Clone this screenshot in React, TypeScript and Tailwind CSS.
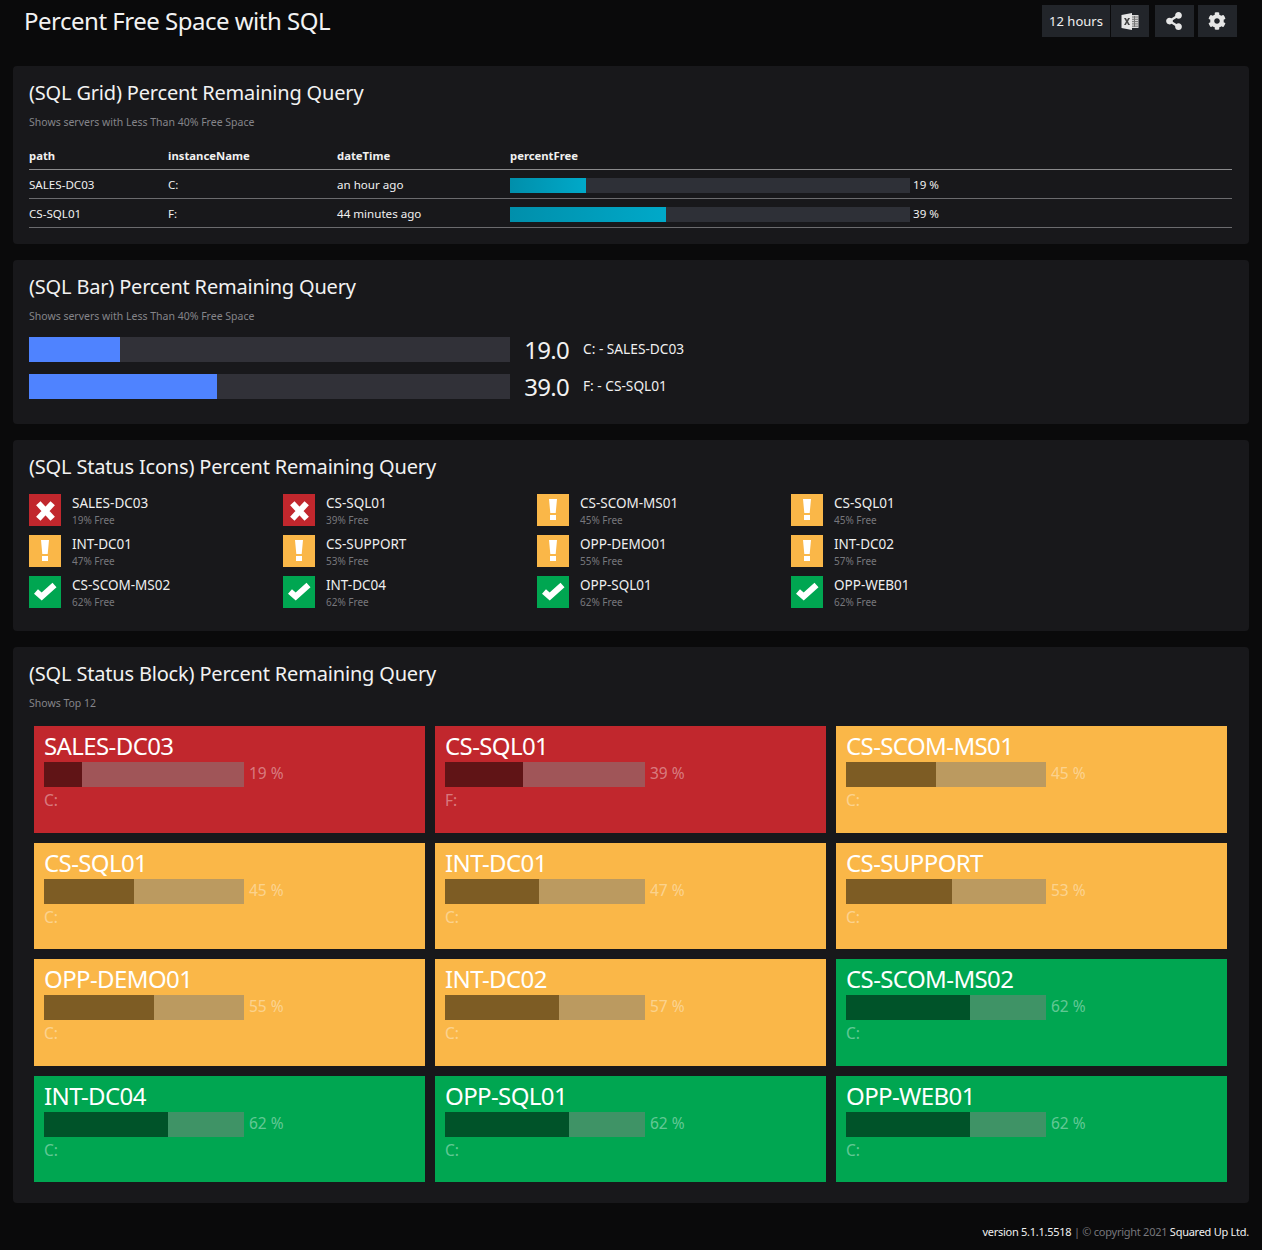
import React from "react";
import { FaCog, FaShareAlt } from "react-icons/fa";

type Status = "red" | "amber" | "green";
const servers: { name: string; pct: number; inst: string; status: Status }[] = [
  { name: "SALES-DC03", pct: 19, inst: "C:", status: "red" },
  { name: "CS-SQL01", pct: 39, inst: "F:", status: "red" },
  { name: "CS-SCOM-MS01", pct: 45, inst: "C:", status: "amber" },
  { name: "CS-SQL01", pct: 45, inst: "C:", status: "amber" },
  { name: "INT-DC01", pct: 47, inst: "C:", status: "amber" },
  { name: "CS-SUPPORT", pct: 53, inst: "C:", status: "amber" },
  { name: "OPP-DEMO01", pct: 55, inst: "C:", status: "amber" },
  { name: "INT-DC02", pct: 57, inst: "C:", status: "amber" },
  { name: "CS-SCOM-MS02", pct: 62, inst: "C:", status: "green" },
  { name: "INT-DC04", pct: 62, inst: "C:", status: "green" },
  { name: "OPP-SQL01", pct: 62, inst: "C:", status: "green" },
  { name: "OPP-WEB01", pct: 62, inst: "C:", status: "green" },
];

const tileBg: Record<Status, string> = { red: "bg-[#c1272d]", amber: "bg-[#fab748]", green: "bg-[#00a651]" };
const trackBg: Record<Status, string> = { red: "bg-[#a05558]", amber: "bg-[#bb9a60]", green: "bg-[#3f9366]" };
const fillBg: Record<Status, string> = { red: "bg-[#601416]", amber: "bg-[#7d5c24]", green: "bg-[#005329]" };

function ExcelIcon() {
  return (
    <svg width="18" height="17" viewBox="0 0 18 17" className="block">
      <rect x="8" y="2" width="9.500" height="13" fill="#d8d8d8" />
      <path d="M10 4h7M10 6.300h7M10 8.600h7M10 10.900h7M10 13.200h7M13.500 3v11" stroke="#777" strokeWidth="1" fill="none" />
      <path d="M0.500 2 11 0v17L0.500 15z" fill="#e6e6e6" />
      <path d="M3 5h1.900l1.100 2.100L7.100 5H9L7 8.500l2 3.400H7.100L6 9.800 4.900 11.900H3L5 8.500z" fill="#444" />
    </svg>
  );
}

function Panel({ top, title, sub, children }: { top: string; title: string; sub?: string; children: React.ReactNode }) {
  return (
    <section className={`bg-[#18181b] rounded-[4px] pl-4 pr-[17px] ${top}`}>
      <h2 className="text-[20px] leading-[28px] text-[#f2f2f2] font-normal tracking-[-0.18px]">{title}</h2>
      {sub && <p className="text-[10.5px] leading-[14px] mt-[8px] text-[#85858a]">{sub}</p>}
      {children}
    </section>
  );
}

function Row({ path, inst, time, pct }: { path: string; inst: string; time: string; pct: number }) {
  return (
    <div className="grid grid-cols-[139px_169px_173px_1fr] items-center h-[29px] pt-[2px] border-b border-[#6b6b6e] text-[11.600px] text-[#f0f0f0]">
      <span>{path}</span>
      <span>{inst}</span>
      <span>{time}</span>
      <div className="flex items-center">
        <div className="w-[400px] h-[15px] mt-px bg-[#2e3037]">
          <div className="h-full bg-gradient-to-r from-[#008fab] to-[#00a9c9]" style={{ width: `${pct}%` }} />
        </div>
        <span className="ml-[3px]">{pct} %</span>
      </div>
    </div>
  );
}

function HBar({ pct, text }: { pct: number; text: string }) {
  return (
    <div className="flex items-center h-[25px]">
      <div className="w-[481px] h-full bg-[#313138]">
        <div className="h-full bg-[#4f83ff]" style={{ width: `${pct}%` }} />
      </div>
      <span className="w-[59px] text-right text-[24px] leading-[25px] tracking-[-0.7px] text-[#f2f2f2]">{pct}.0</span>
      <span className="ml-[14px] text-[13.700px] text-[#f0f0f0]">{text}</span>
    </div>
  );
}

function StatusGlyph({ status }: { status: Status }) {
  return (
    <div className={`w-8 h-8 shrink-0 ${tileBg[status]}`}>
      <svg width="32" height="32" viewBox="0 0 32 32" className="block">
        {status === "red" && <path d="M9.300 9.300 23.700 24.700M23.700 9.300 9.300 24.700" stroke="#fff" strokeWidth="6" fill="none" />}
        {status === "amber" && <path d="M12 5h8l-1.300 14h-5.400zM13 21h6v5h-6z" fill="#fff" />}
        {status === "green" && <path d="M7 15.500 12.700 20.500 25.500 9" stroke="#fff" strokeWidth="6" fill="none" />}
      </svg>
    </div>
  );
}

export default function App() {
  return (
    <div className="w-[1262px] h-[1250px] overflow-hidden bg-[#0a0a0b] font-['Noto_Sans','Open_Sans',sans-serif]">
      <header className="h-[66px] flex items-start justify-between pl-6 pr-[25px]">
        <h1 className="text-[24px] leading-[42px] text-[#f2f2f2] tracking-[-0.5px]">Percent Free Space with SQL</h1>
        <div className="flex items-center mt-[5px]">
          <div className="flex gap-px">
            <div className="h-8 w-[68px] pt-px bg-[#22252a] flex items-center justify-center text-[13px] text-[#f0f0f0]">12 hours</div>
            <div className="h-8 w-[38px] bg-[#22252a] flex items-center justify-center"><ExcelIcon /></div>
          </div>
          <div className="h-8 w-[39px] pr-[2px] ml-[6px] bg-[#22252a] flex items-center justify-center text-[#e6e6e6]"><FaShareAlt size={18} /></div>
          <div className="h-8 w-[39px] pr-[2px] ml-[4px] bg-[#22252a] flex items-center justify-center text-[#e6e6e6]"><FaCog size={18} /></div>
        </div>
      </header>

      <main className="mx-[13px] flex flex-col gap-4">
        <Panel top="pt-[13px] h-[178px]" title="(SQL Grid) Percent Remaining Query" sub="Shows servers with Less Than 40% Free Space">
          <div className="mt-[13px]">
            <div className="grid grid-cols-[139px_169px_173px_1fr] items-center h-[28px] pt-[2px] border-b border-[#8a8a8c] text-[11.300px] font-bold text-[#f0f0f0]">
              <span>path</span><span>instanceName</span><span>dateTime</span><span>percentFree</span>
            </div>
            <Row path="SALES-DC03" inst="C:" time="an hour ago" pct={19} />
            <Row path="CS-SQL01" inst="F:" time="44 minutes ago" pct={39} />
          </div>
        </Panel>

        <Panel top="pt-[13px] h-[164px]" title="(SQL Bar) Percent Remaining Query" sub="Shows servers with Less Than 40% Free Space">
          <div className="mt-[14px] flex flex-col gap-3">
            <HBar pct={19} text="C: - SALES-DC03" />
            <HBar pct={39} text="F: - CS-SQL01" />
          </div>
        </Panel>

        <Panel top="pt-[13px] h-[191px]" title="(SQL Status Icons) Percent Remaining Query">
          <div className="mt-[13px] grid grid-cols-[repeat(4,254px)] gap-y-[9px]">
            {servers.map((s, i) => (
              <div key={i} className="flex gap-[11px] h-8">
                <StatusGlyph status={s.status} />
                <div className="flex flex-col">
                  <span className="text-[13.500px] leading-[18px] text-[#efefef]">{s.name}</span>
                  <span className="text-[10px] leading-[17px] text-[#77777c]">{s.pct}% Free</span>
                </div>
              </div>
            ))}
          </div>
        </Panel>

        <Panel top="pt-[13px] h-[556px]" title="(SQL Status Block) Percent Remaining Query" sub="Shows Top 12">
          <div className="mt-[16px] px-[5px] grid grid-cols-3 gap-[10px] auto-rows-[106.500px]">
            {servers.map((s, i) => (
              <div key={i} className={`${tileBg[s.status]} pl-[10px] pt-[4px]`}>
                <div className="text-[24px] leading-[31px] text-white tracking-[-0.6px]">{s.name}</div>
                <div className="flex items-center mt-px">
                  <div className={`w-[200px] h-[25px] ${trackBg[s.status]}`}>
                    <div className={`h-full ${fillBg[s.status]}`} style={{ width: `${s.pct}%` }} />
                  </div>
                  <span className="ml-[5px] pb-[2px] text-[15.500px] text-white/40">{s.pct} %</span>
                </div>
                <div className="mt-[3px] text-[15.500px] leading-[20px] text-white/40">{s.inst}</div>
              </div>
            ))}
          </div>
        </Panel>
      </main>

      <footer className="mt-[21px] pr-[13px] text-right text-[11px] leading-[16px] tracking-[-0.26px] text-[#f0f0f0]">
        version 5.1.1.5518 <span className="text-[#77777c]">| © copyright 2021</span> Squared Up Ltd.
      </footer>
    </div>
  );
}
